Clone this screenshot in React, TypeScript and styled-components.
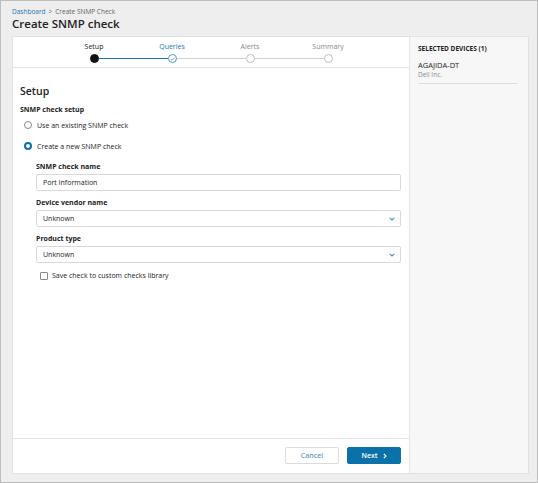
import React, { FC, useState } from 'react';
import styled, { createGlobalStyle } from 'styled-components';

const GlobalStyle = createGlobalStyle`
    html, body {
        margin: 0;
        padding: 0;
        background: #ffffff;
    }
    * {
        box-sizing: border-box;
    }
    body {
        font-family: "Open Sans", "Liberation Sans", sans-serif;
        color: #222;
    }
`;

const Page = styled.div`
    width: 538px;
    height: 483px;
    border: 1px solid #bdbdbd;
    background: #eeeeee;
    padding: 0 8px 8px 11px;
    display: flex;
    flex-direction: column;
`;

const Breadcrumb = styled.div`
    font-size: 6.5px;
    color: #666;
    margin-top: 7px;
    line-height: 8px;
    display: flex;
    gap: 3px;
    a {
        color: #1a78b4;
        text-decoration: none;
    }
`;

const Title = styled.h1`
    margin: 1px 0 0;
    font-size: 11.5px;
    font-weight: 600;
    line-height: 14px;
    color: #222;
`;

const Card = styled.div`
    margin-top: 5px;
    flex: 1;
    display: flex;
    background: #fff;
    border: 1px solid #e2e2e2;
`;

const Main = styled.div`
    width: 396px;
    display: flex;
    flex-direction: column;
`;

const Side = styled.aside`
    flex: 1;
    background: #f7f7f7;
    border-left: 1px solid #e6e6e6;
    padding: 7px 10px 0 8px;
`;

const SideTitle = styled.div`
    font-size: 6.5px;
    font-weight: 700;
    color: #222;
    line-height: 9px;
`;

const DeviceItem = styled.div`
    margin-top: 7px;
    padding-bottom: 4px;
    border-bottom: 1px solid #dddddd;
`;

const DeviceName = styled.div`
    font-size: 7.5px;
    color: #222;
    line-height: 10px;
`;

const DeviceVendor = styled.div`
    font-size: 6.5px;
    color: #8a8a8a;
    line-height: 9px;
`;

const Stepper = styled.div`
    height: 31px;
    border-bottom: 1px solid #e4e4e4;
    display: flex;
    flex-direction: column;
    align-items: center;
    padding-top: 5px;
`;

const StepLabels = styled.div`
    display: grid;
    grid-template-columns: repeat(4, 78px);
`;

const StepLabel = styled.span<{ $state: 'done' | 'current' | 'todo' }>`
    text-align: center;
    font-size: 7px;
    line-height: 9px;
    color: ${(p) => (p.$state === 'done' ? '#222' : p.$state === 'current' ? '#1a78b4' : '#888')};
`;

const Track = styled.div`
    display: flex;
    align-items: center;
    margin-top: 3px;
`;

const Dot = styled.span<{ $state: 'done' | 'current' | 'todo' }>`
    width: 9px;
    height: 9px;
    border-radius: 50%;
    display: flex;
    align-items: center;
    justify-content: center;
    background: ${(p) => (p.$state === 'done' ? '#111' : '#fff')};
    border: 1px solid
        ${(p) => (p.$state === 'done' ? '#111' : p.$state === 'current' ? '#4a9acb' : '#bdbdbd')};
`;

const Line = styled.span<{ $active?: boolean }>`
    width: 69px;
    height: 1px;
    background: ${(p) => (p.$active ? '#1a78b4' : '#cfcfcf')};
`;

const Body = styled.div`
    flex: 1;
    padding: 16px 8px 0 7px;
    font-size: 7px;
`;

const Heading = styled.h2`
    margin: 0;
    font-size: 10.5px;
    font-weight: 600;
    line-height: 14px;
    color: #222;
`;

const SubHeading = styled.div`
    margin-top: 7px;
    font-size: 7px;
    font-weight: 700;
    line-height: 9px;
`;

const RadioRow = styled.label<{ $first?: boolean }>`
    display: flex;
    align-items: center;
    gap: 5px;
    margin-top: ${(p) => (p.$first ? '4px' : '7px')};
    padding-left: 4px;
    font-size: 7px;
    line-height: 9px;
    height: 14px;
    cursor: pointer;
`;

const RadioCircle = styled.span<{ $checked: boolean }>`
    width: 8px;
    height: 8px;
    border-radius: 50%;
    border: ${(p) => (p.$checked ? '2.5px solid #0a6fa6' : '1px solid #888')};
    background: #fff;
`;

const Indented = styled.div`
    padding-left: 16px;
    margin-top: 9px;
`;

const FieldLabel = styled.div<{ $first?: boolean }>`
    font-size: 7px;
    font-weight: 700;
    line-height: 9px;
    margin-top: ${(p) => (p.$first ? '0' : '7px')};
    margin-bottom: 3px;
`;

const TextInput = styled.input`
    display: block;
    width: 100%;
    height: 17px;
    margin: 0;
    border: 1px solid #d9d9d9;
    border-radius: 2px;
    padding: 0 6px;
    font-family: inherit;
    font-size: 7px;
    color: #222;
    outline: none;
`;

const SelectBox = styled.div`
    height: 17px;
    border: 1px solid #d9d9d9;
    border-radius: 2px;
    padding: 0 5px 0 6px;
    display: flex;
    align-items: center;
    justify-content: space-between;
    font-size: 7px;
    color: #222;
`;

const CheckRow = styled.label`
    display: flex;
    align-items: center;
    gap: 4px;
    margin-top: 8px;
    padding-left: 4px;
    font-size: 7px;
    line-height: 9px;
`;

const CheckBox = styled.span`
    width: 8px;
    height: 8px;
    border: 1px solid #888;
    border-radius: 1px;
    background: #fff;
`;

const Footer = styled.div`
    height: 35px;
    border-top: 1px solid #e4e4e4;
    display: flex;
    justify-content: flex-end;
    align-items: flex-start;
    gap: 8px;
    padding: 8px 8px 0 0;
`;

const Btn = styled.button<{ $primary?: boolean }>`
    height: 17px;
    width: ${(p) => (p.$primary ? '54px' : '54px')};
    border-radius: 2px;
    font-family: inherit;
    font-size: 7px;
    font-weight: 600;
    display: flex;
    align-items: center;
    justify-content: center;
    gap: 5px;
    cursor: pointer;
    border: 1px solid ${(p) => (p.$primary ? '#0a72a8' : '#dcdcdc')};
    background: ${(p) => (p.$primary ? '#0a72a8' : '#fff')};
    color: ${(p) => (p.$primary ? '#fff' : '#6a9cc0')};
`;

const Chevron: FC<{ color?: string }> = ({ color = '#3b94c9' }) => (
    <svg width="6" height="4" viewBox="0 0 6 4">
        <path d="M0.8 0.8 L3 3 L5.2 0.8" fill="none" stroke={color} strokeWidth="1.1" />
    </svg>
);

const steps: { name: string; state: 'done' | 'current' | 'todo' }[] = [
    { name: 'Setup', state: 'done' },
    { name: 'Queries', state: 'current' },
    { name: 'Alerts', state: 'todo' },
    { name: 'Summary', state: 'todo' },
];

const App: FC = () => {
    const [mode, setMode] = useState<'existing' | 'new'>('new');
    const [checkName, setCheckName] = useState('Port Information');

    return (
        <React.Fragment>
            <GlobalStyle />
            <Page>
                <Breadcrumb>
                    <a href="#">Dashboard</a>
                    <span>&gt;</span>
                    <span>Create SNMP Check</span>
                </Breadcrumb>
                <Title>Create SNMP check</Title>
                <Card>
                    <Main>
                        <Stepper>
                            <StepLabels>
                                {steps.map((s) => (
                                    <StepLabel key={s.name} $state={s.state}>
                                        {s.name}
                                    </StepLabel>
                                ))}
                            </StepLabels>
                            <Track>
                                {steps.map((s, i) => (
                                    <React.Fragment key={s.name}>
                                        {i > 0 && <Line $active={i === 1} />}
                                        <Dot $state={s.state}>
                                            {s.state === 'current' && (
                                                <svg width="5" height="4" viewBox="0 0 5 4">
                                                    <path
                                                        d="M0.5 2 L2 3.3 L4.5 0.7"
                                                        fill="none"
                                                        stroke="#3b94c9"
                                                        strokeWidth="0.8"
                                                    />
                                                </svg>
                                            )}
                                        </Dot>
                                    </React.Fragment>
                                ))}
                            </Track>
                        </Stepper>
                        <Body>
                            <Heading>Setup</Heading>
                            <SubHeading>SNMP check setup</SubHeading>
                            <RadioRow $first onClick={() => setMode('existing')}>
                                <RadioCircle $checked={mode === 'existing'} />
                                Use an existing SNMP check
                            </RadioRow>
                            <RadioRow onClick={() => setMode('new')}>
                                <RadioCircle $checked={mode === 'new'} />
                                Create a new SNMP check
                            </RadioRow>
                            <Indented>
                                <FieldLabel $first>SNMP check name</FieldLabel>
                                <TextInput value={checkName} onChange={(e) => setCheckName(e.target.value)} />
                                <FieldLabel>Device vendor name</FieldLabel>
                                <SelectBox>
                                    Unknown
                                    <Chevron />
                                </SelectBox>
                                <FieldLabel>Product type</FieldLabel>
                                <SelectBox>
                                    Unknown
                                    <Chevron />
                                </SelectBox>
                                <CheckRow>
                                    <CheckBox />
                                    Save check to custom checks library
                                </CheckRow>
                            </Indented>
                        </Body>
                        <Footer>
                            <Btn>Cancel</Btn>
                            <Btn $primary>
                                Next
                                <svg width="4" height="6" viewBox="0 0 4 6">
                                    <path d="M0.8 0.8 L3 3 L0.8 5.2" fill="none" stroke="#fff" strokeWidth="1.1" />
                                </svg>
                            </Btn>
                        </Footer>
                    </Main>
                    <Side>
                        <SideTitle>SELECTED DEVICES (1)</SideTitle>
                        <DeviceItem>
                            <DeviceName>AGAJIDA-DT</DeviceName>
                            <DeviceVendor>Dell Inc.</DeviceVendor>
                        </DeviceItem>
                    </Side>
                </Card>
            </Page>
        </React.Fragment>
    );
};

export default App;
